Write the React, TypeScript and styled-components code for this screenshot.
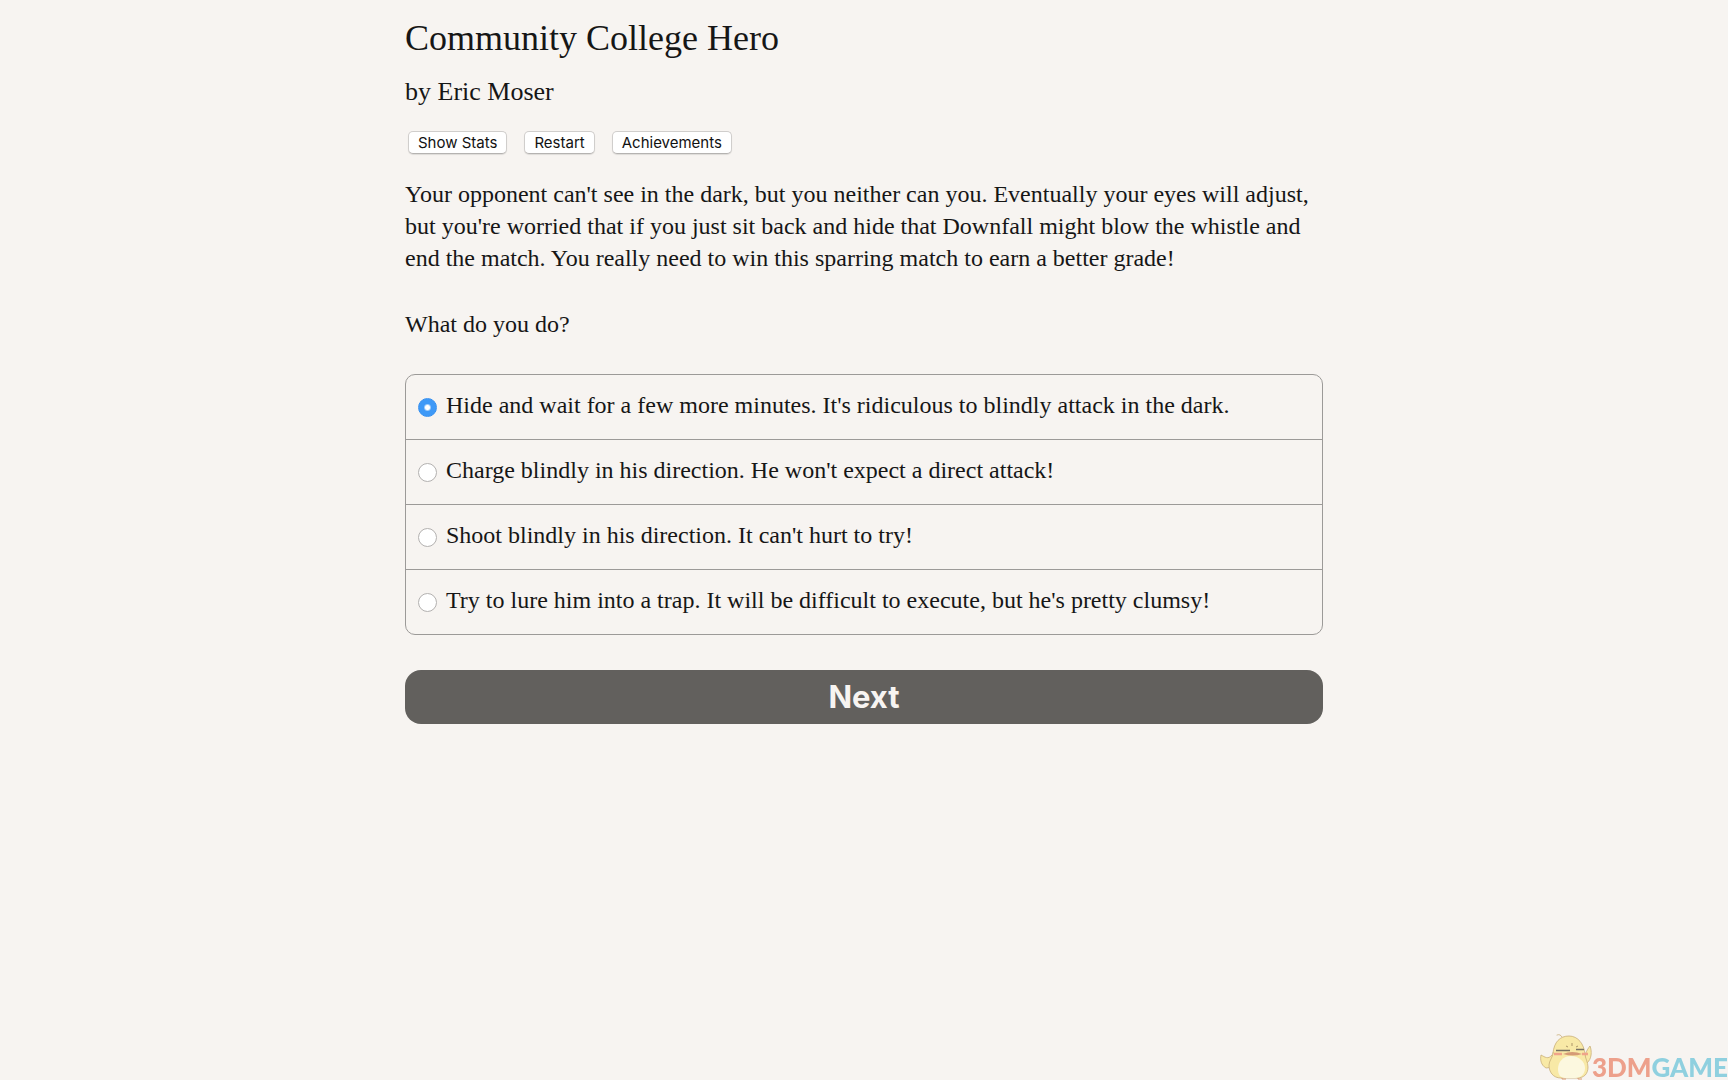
import React, { useState } from 'react';
import styled, { createGlobalStyle } from 'styled-components';

const SERIF = "Palatino, 'Palatino Linotype', 'Liberation Serif', serif";
const SANS = "Inter, 'Liberation Sans', sans-serif";

const GlobalStyle = createGlobalStyle`
  *, *::before, *::after { box-sizing: border-box; }
  body {
    margin: 0;
    background: #f7f4f1;
    color: #161616;
    font-family: ${SERIF};
    font-size: 24px;
    line-height: 32px;
  }
`;

const Page = styled.main`
  max-width: 950px;
  margin: 0 auto;
  padding: 16px;
`;

const Title = styled.h1`
  margin: 0;
  font-size: 36px;
  font-weight: 400;
  line-height: 44px;
`;

const Author = styled.h2`
  margin: 16px 0 0;
  font-size: 26px;
  font-weight: 400;
  line-height: 32px;
`;

const Toolbar = styled.nav`
  display: flex;
  flex-wrap: wrap;
  gap: 17px;
  margin: 23px 0 24px;
  padding-left: 3px;
`;

const ToolButton = styled.button`
  height: 23px;
  padding: 0 9px;
  border: 1px solid #d0cecc;
  border-bottom-color: #b5b3b1;
  border-radius: 5px;
  background: #fff;
  box-shadow: 0 1px 1px rgba(0, 0, 0, 0.1);
  color: #111;
  font-family: ${SANS};
  font-size: 15px;
  line-height: 21px;
`;

const Paragraph = styled.p`
  margin: 0 0 34px;
`;

const Choices = styled.fieldset`
  min-width: 0;
  margin: 0;
  padding: 0;
  border: 1px solid #9c9a98;
  border-radius: 10px;
`;

const Choice = styled.label`
  display: flex;
  align-items: center;
  gap: 9px;
  min-height: 64px;
  padding: 0 12px;
  cursor: pointer;

  & + & {
    min-height: 65px;
    border-top: 1px solid #9c9a98;
  }
`;

const ChoiceText = styled.span`
  padding-bottom: 4px;
`;

const Radio = styled.input`
  appearance: none;
  flex: none;
  width: 19px;
  height: 19px;
  margin: 0;
  border: 1px solid #b3b1b0;
  border-radius: 50%;
  background: #fff;

  &:checked {
    border-color: #3690f0;
    background: radial-gradient(circle, #fff 2px, #3e99f7 4px);
  }
`;

const NextButton = styled.button`
  display: block;
  width: 100%;
  height: 54px;
  margin-top: 35px;
  padding: 0;
  border: 0;
  border-radius: 16px;
  background: #62605d;
  color: #f7f4f1;
  font-family: ${SANS};
  font-size: 31px;
  font-weight: 700;
  line-height: 54px;
`;

const Watermark = styled.div`
  position: fixed;
  right: 0;
  bottom: 0;
  display: flex;
  align-items: flex-end;
  white-space: nowrap;
`;

const Mascot = styled.svg`
  flex: none;
  width: 52px;
  height: 46px;
`;

const Brand = styled.span<{ $tone: string }>`
  color: ${(p) => p.$tone};
  font-family: Lato, ${SANS};
  font-size: 26px;
  font-weight: 900;
  line-height: 26px;
`;

const tools = ['Show Stats', 'Restart', 'Achievements'];

const choices = [
  "Hide and wait for a few more minutes. It's ridiculous to blindly attack in the dark.",
  "Charge blindly in his direction. He won't expect a direct attack!",
  "Shoot blindly in his direction. It can't hurt to try!",
  "Try to lure him into a trap. It will be difficult to execute, but he's pretty clumsy!",
];

function Chick() {
  return (
    <Mascot viewBox="0 0 52 46" aria-hidden="true">
      <g fill="#f8e9a6" stroke="#c9ae79" strokeWidth="0.8" strokeLinecap="round" strokeLinejoin="round">
        <path d="M22 3c-1-2-3-3-5-2" fill="none" />
        <path d="M45 28c-1-6 1-11 5-16 2 5 2 13-3 17z" />
        <path d="M12 21C8 26 5 23 1 21c-1 5 0 10 5 13l8-1z" />
        <path d="M13 19C14 8 20 2 29 2s15 8 16 18c0 4 3 8 3 13 0 7-4 11-11 11H21C13 44 9 38 9 31c0-4 4-8 4-12z" />
      </g>
      <path d="M18 35c0-7 5-13 13-13s14 6 14 12-4 10-10 10H25c-5 0-7-4-7-9z" fill="#fcf8df" />
      <path d="M16 16.500h14M36 15.500h8" stroke="#777263" strokeWidth="1.3" />
      <path d="M26 12l2 1M32 9v3M38 12l-2 1" stroke="#ad9669" strokeWidth="1" />
      <path d="M14 20h8M42 20h6" stroke="#f0a489" strokeWidth="2.500" />
      <path d="M23 20q9-4 19 0-9 3-19 0z" fill="#d59b76" />
      <path d="M22 44v1h4M38 44v1h4" fill="none" stroke="#d99a70" />
    </Mascot>
  );
}

export default function App() {
  const [selected, setSelected] = useState(0);
  return (
    <>
      <GlobalStyle />
      <Page>
        <header>
          <Title>Community College Hero</Title>
          <Author>by Eric Moser</Author>
        </header>
        <Toolbar aria-label="Game">
          {tools.map((name) => (
            <ToolButton key={name} type="button">{name}</ToolButton>
          ))}
        </Toolbar>
        <Paragraph>
          Your opponent can't see in the dark, but you neither can you. Eventually your eyes will adjust,
          but you're worried that if you just sit back and hide that Downfall might blow the whistle and
          end the match. You really need to win this sparring match to earn a better grade!
        </Paragraph>
        <Paragraph>What do you do?</Paragraph>
        <form onSubmit={(e) => e.preventDefault()}>
          <Choices>
            {choices.map((text, i) => (
              <Choice key={text}>
                <Radio type="radio" name="choice" checked={selected === i} onChange={() => setSelected(i)} />
                <ChoiceText>{text}</ChoiceText>
              </Choice>
            ))}
          </Choices>
          <NextButton type="submit">Next</NextButton>
        </form>
      </Page>
      <Watermark>
        <Chick />
        <Brand $tone="#eda08b">3DM</Brand>
        <Brand $tone="#8fd0df">GAME</Brand>
      </Watermark>
    </>
  );
}
